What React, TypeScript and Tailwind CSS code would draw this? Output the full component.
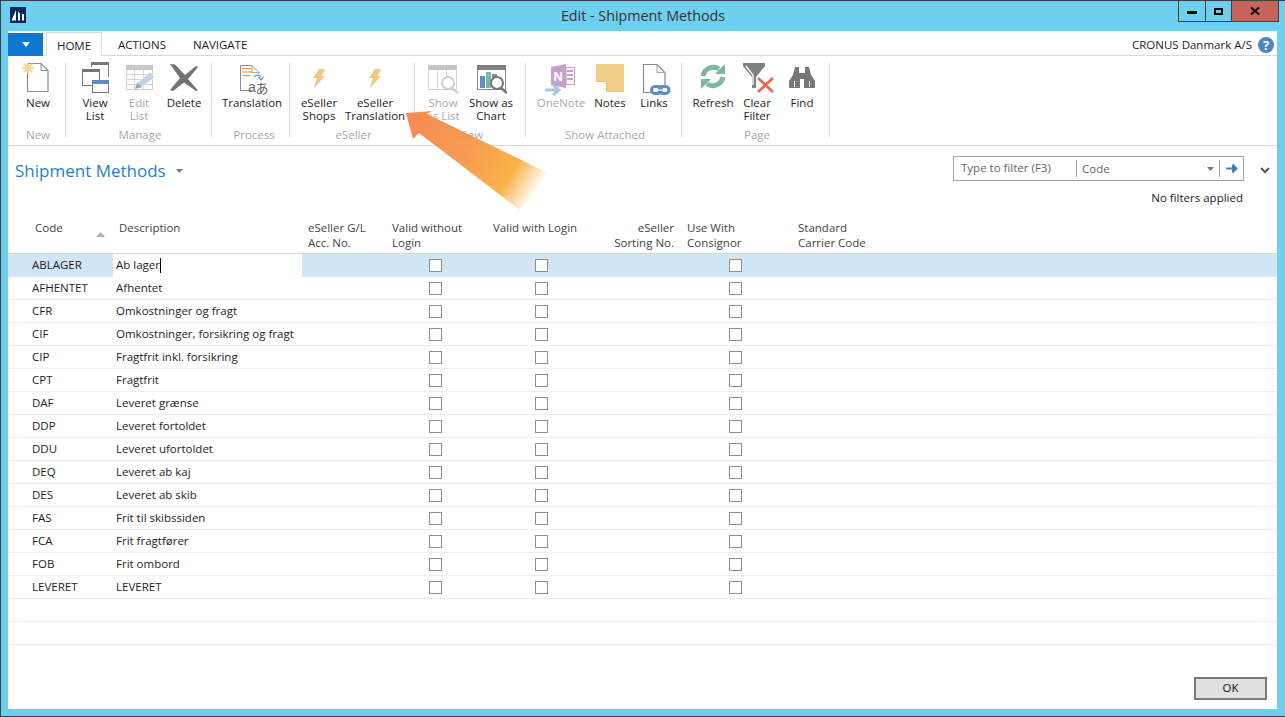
import React from "react";

const W = ({ children, w = 34, h = 34 }: { children: React.ReactNode; w?: number; h?: number }) => (
  <svg width={w} height={h} viewBox={`0 0 ${w} ${h}`} fill="none">{children}</svg>
);

const IconNew = () => (
  <W>
    <path d="M6.500 12V1.500H20L27 8.500V29.500H6.500V12" stroke="#8c8c8c" strokeWidth="1.200" />
    <path d="M20 1.500V8.500H27" stroke="#8c8c8c" strokeWidth="1" />
    <circle cx="7" cy="6" r="3.500" fill="#f6dc9e" />
    <path d="M7 0V12M1 6H13M2.500 1.500L11.500 10.500M11.500 1.500L2.500 10.500" stroke="#f6d68c" strokeWidth="1.500" />
  </W>
);
const IconViewList = () => (
  <W>
    <path d="M13.500 5V0.500H30.500V15" stroke="#777" strokeWidth="1" />
    <rect x="13" y="0" width="18" height="3" fill="#777" />
    <rect x="4.500" y="7.500" width="17" height="16" fill="#fff" stroke="#777" />
    <rect x="4" y="7" width="18" height="3" fill="#777" />
    <rect x="14.500" y="18.500" width="16" height="12" fill="#fff" stroke="#777" />
    <rect x="14" y="18" width="17" height="4" fill="#5b8fc4" />
  </W>
);
const IconEditList = () => (
  <W>
    <rect x="4.500" y="3.500" width="26" height="24" stroke="#cfcfcf" fill="#fff" />
    <rect x="4" y="3" width="27" height="5" fill="#c8c8c8" />
    <path d="M4 12.500H31M4 17.500H31M4 22.500H31M12.500 8V27M21.500 8V27" stroke="#d6d6d6" />
    <path d="M13 27L15 21L28 10L33 15L20 25Z" fill="#bcd3ea" stroke="#fff" strokeWidth="0.800" />
    <path d="M13 27L15 21L20 25Z" fill="#8aa9c8" />
  </W>
);
const IconDelete = () => (
  <W>
    <path d="M3 2L8 2.500L18 13L29 4L31 5L21 17L31 28.500L29 29L17 20.500L6 29L3 28L13 16Z" fill="#737373" />
  </W>
);
const IconTranslation = () => (
  <W w={36}>
    <path d="M18 28.500H6.500V3.500H18L25 10.500V12" stroke="#8c8c8c" />
    <path d="M18 3.500V10.500H25" stroke="#aaa" />
    <path d="M8 6.500H18M8 10H18M8 13.500H16" stroke="#ef8e4d" strokeWidth="1.200" />
    <path d="M20 15C22 12.500 26 12.500 27 15.500" stroke="#5c9bd4" strokeWidth="1.200" />
    <path d="M24.500 15L27 18L29.500 15" stroke="#5c9bd4" strokeWidth="1.200" />
    <text x="14" y="30" fontSize="14" fontFamily="'Liberation Sans', sans-serif" fill="#666">a</text>
    <text x="21.500" y="31" fontSize="13" fontFamily="'Noto Sans CJK JP', sans-serif" fill="#666">あ</text>
  </W>
);
const IconBolt = () => (
  <W w={16}>
    <path d="M8 7H14L10.500 14H14L3 26L6 16H2Z" fill="#f0c884" />
  </W>
);
const IconShowList = () => (
  <W w={32}>
    <g transform="translate(0 2)">
      <rect x="1.500" y="1.500" width="28" height="24" stroke="#d4d4d4" fill="#fff" />
      <rect x="1" y="1" width="29" height="5" fill="#c4c4c4" />
      <path d="M10.500 6V26M19.500 6V26" stroke="#d4d4d4" />
      <circle cx="21" cy="19" r="6" stroke="#d0d0d0" strokeWidth="2" fill="#fff" />
      <path d="M25 24L31 29" stroke="#cfcfcf" strokeWidth="2.500" />
    </g>
  </W>
);
const IconChart = () => (
  <W w={32}>
    <g transform="translate(1 2)">
      <rect x="1.500" y="1.500" width="28" height="24" stroke="#8a8a8a" fill="#fff" />
      <rect x="1" y="1" width="29" height="5" fill="#808080" />
      <rect x="4" y="12" width="5" height="12" fill="#5c90c0" />
      <rect x="10" y="8" width="5" height="16" fill="#80b5a6" />
      <rect x="16" y="10" width="5" height="14" fill="#8a8a8a" />
      <circle cx="21" cy="19" r="6" stroke="#777" strokeWidth="2" fill="#fff" />
      <path d="M25 24L31 29" stroke="#777" strokeWidth="2.500" />
    </g>
  </W>
);
const IconOneNote = () => (
  <W>
    <path d="M7 5L22 2V26L7 23Z" fill="#c5a0c9" />
    <path d="M22 5.500H30.500V22.500H22Z" fill="#fff" stroke="#c5a0c9" strokeWidth="1.200" />
    <path d="M23 9H29M23 13H29M23 17H29" stroke="#c5a0c9" strokeWidth="2" />
    <text x="9.500" y="19" fontSize="13" fontWeight="700" fontFamily="'Liberation Sans', sans-serif" fill="#fff">N</text>
    <path d="M1 28H14M9 23L15 28L9 33" stroke="#a9c6e3" strokeWidth="3" />
  </W>
);
const IconNotes = () => (
  <W w={30}>
    <path d="M1 2H29V30H12L1 19Z" fill="#efce8a" />
    <path d="M1 19H12V30Z" fill="#fff" />
    <path d="M1.500 19.500H11.500V29.500" stroke="#e3bd72" strokeWidth="1" />
  </W>
);
const IconLinks = () => (
  <W w={34}>
    <path d="M14 30.500H6.500V2.500H20L28 10.500V23" stroke="#8c8c8c" strokeWidth="1.200" />
    <path d="M20 2.500V10.500H28" stroke="#a5a5a5" />
    <rect x="14.500" y="24.500" width="10" height="7" rx="3.500" stroke="#5a8fc4" strokeWidth="3" />
    <rect x="22" y="24.500" width="10" height="7" rx="3.500" stroke="#5a8fc4" strokeWidth="3" />
    <path d="M19 28H27" stroke="#fff" strokeWidth="1.300" />
  </W>
);
const IconRefresh = () => (
  <W w={30}>
    <path d="M5 14A10.500 10.500 0 0 1 21 7" stroke="#7fb5a5" strokeWidth="5" />
    <path d="M27 2V12H17Z" fill="#7fb5a5" />
    <path d="M25 15A10.500 10.500 0 0 1 9 22" stroke="#7fb5a5" strokeWidth="5" />
    <path d="M3 27V17H13Z" fill="#7fb5a5" />
  </W>
);
const IconClear = () => (
  <W>
    <path d="M3 1H25V4L16 15V26H12V15L3 4Z" fill="#808080" />
    <path d="M6 4L13 13V23" stroke="#fff" strokeWidth="1.300" />
    <path d="M18 16L33 30M33 16L18 30" stroke="#e0704f" strokeWidth="2.800" />
  </W>
);
const IconFind = () => (
  <W w={30}>
    <path d="M8 5H12V11H18V5H22L24 13L28 19V26H17V17H13V26H2V19L6 13Z" fill="#777" />
    <path d="M7.500 19V25M22.500 19V25" stroke="#fff" strokeWidth="1" />
  </W>
);

type B = { lines: string[]; w: number; icon: React.ReactNode; off?: boolean };
type G = { label: string; w: number; pl: number; lp: number; items: B[] };

const groups: G[] = [
  { label: "New", w: 57, pl: 4, lp: 2, items: [{ lines: ["New"], w: 52, icon: <IconNew /> }] },
  {
    label: "Manage", w: 145, pl: 7, lp: 2, items: [
      { lines: ["View", "List"], w: 44, icon: <IconViewList /> },
      { lines: ["Edit", "List"], w: 44, icon: <IconEditList />, off: true },
      { lines: ["Delete"], w: 46, icon: <IconDelete /> },
    ]
  },
  { label: "Process", w: 77, pl: 2, lp: 6, items: [{ lines: ["Translation"], w: 76, icon: <IconTranslation /> }] },
  {
    label: "eSeller", w: 124, pl: 1, lp: 2, items: [
      { lines: ["eSeller", "Shops"], w: 56, icon: <IconBolt /> },
      { lines: ["eSeller", "Translation"], w: 56, icon: <IconBolt /> },
    ]
  },
  {
    label: "View", w: 110, pl: 5, lp: 0, items: [
      { lines: ["Show", "as List"], w: 46, icon: <IconShowList />, off: true },
      { lines: ["Show as", "Chart"], w: 50, icon: <IconChart /> },
    ]
  },
  {
    label: "Show Attached", w: 155, pl: 4, lp: 2, items: [
      { lines: ["OneNote"], w: 62, icon: <IconOneNote />, off: true },
      { lines: ["Notes"], w: 36, icon: <IconNotes /> },
      { lines: ["Links"], w: 52, icon: <IconLinks /> },
    ]
  },
  {
    label: "Page", w: 147, pl: 6, lp: 2, items: [
      { lines: ["Refresh"], w: 50, icon: <IconRefresh /> },
      { lines: ["Clear", "Filter"], w: 38, icon: <IconClear /> },
      { lines: ["Find"], w: 52, icon: <IconFind /> },
    ]
  },
];

const rows: [string, string][] = [
  ["ABLAGER", "Ab lager"],
  ["AFHENTET", "Afhentet"],
  ["CFR", "Omkostninger og fragt"],
  ["CIF", "Omkostninger, forsikring og fragt"],
  ["CIP", "Fragtfrit inkl. forsikring"],
  ["CPT", "Fragtfrit"],
  ["DAF", "Leveret grænse"],
  ["DDP", "Leveret fortoldet"],
  ["DDU", "Leveret ufortoldet"],
  ["DEQ", "Leveret ab kaj"],
  ["DES", "Leveret ab skib"],
  ["FAS", "Frit til skibssiden"],
  ["FCA", "Frit fragtfører"],
  ["FOB", "Frit ombord"],
  ["LEVERET", "LEVERET"],
];

const cols = "grid grid-cols-[105px_189px_84px_101px_109px_85px_111px_1fr]";

const Check = ({ pl }: { pl: string }) => (
  <div className={`flex items-center ${pl}`}>
    <div className="w-[13px] h-[13px] border border-[#8e8e8e] bg-white" />
  </div>
);

export default function App() {
  return (
    <div className="relative w-[1285px] h-[717px] overflow-hidden bg-[#6fcfef] border-t border-l border-b border-[#3c4043] flex flex-col text-[11.5px] leading-[13px] text-[#1e1e1e] font-['Open_Sans','Noto_Sans',sans-serif]">
      {/* title bar */}
      <div className="h-[30px] flex shrink-0">
        <div className="ml-[9px] mt-[6px] w-[16px] h-[16px] bg-[#0b2a5c]">
          <svg width="16" height="16" viewBox="0 0 16 16"><path d="M1.500 13.500L6 3V13.500ZM8 13.500V4L10 7V13.500ZM12 13.500V7H14V13.500Z" fill="#fff" /></svg>
        </div>
        <div className="flex-1 pl-[82px] text-center text-[14.300px] leading-[30px] text-[#333]">Edit - Shipment Methods</div>
        <div className="mr-[6px] w-[101px] h-[21px] flex border-l border-r border-b border-[#3c4043]">
          <div className="w-[27px] border-r border-[#3c4043] flex items-center justify-center">
            <div className="w-[10px] h-[3px] bg-black mt-[3px]" />
          </div>
          <div className="w-[26px] border-r border-[#3c4043] flex items-center justify-center">
            <div className="w-[9px] h-[7px] border-2 border-black" />
          </div>
          <div className="flex-1 bg-[#c8635a] flex items-center justify-center">
            <svg width="10" height="8" viewBox="0 0 10 8"><path d="M1 0.500L9 7.500M9 0.500L1 7.500" stroke="#000" strokeWidth="2" /></svg>
          </div>
        </div>
      </div>

      {/* client */}
      <div className="ml-[7px] mr-[8px] flex-1 mb-[7px] bg-white flex flex-col min-h-0">
        {/* tabs */}
        <div className="h-[25px] shrink-0 flex items-end border-b border-[#d9d9d9] pr-[3px]">
          <div className="w-[35px] h-[23px] mb-[-1px] bg-[#0e78cf] flex items-center justify-center">
            <svg width="8" height="5" viewBox="0 0 8 5"><path d="M0 0H8L4 5Z" fill="#fff" /></svg>
          </div>
          <div className="ml-[3px] w-[56px] h-[24px] mb-[-1px] border border-b-0 border-[#d9d9d9] bg-white text-center leading-[26px]">HOME</div>
          <div className="ml-[16px] leading-[25px] h-[23px]">ACTIONS</div>
          <div className="ml-[27px] leading-[25px] h-[23px]">NAVIGATE</div>
          <div className="ml-auto h-[23px] leading-[25px]">CRONUS Danmark A/S</div>
          <div className="ml-[6px] mb-[2px] w-[16px] h-[16px] rounded-full bg-[#4f86c0] text-white text-center text-[13px] leading-[16px] font-bold">?</div>
        </div>

        {/* ribbon */}
        <div className="h-[90px] shrink-0 flex border-b border-[#d9d9d9]">
          {groups.map((g) => (
            <div key={g.label} style={{ width: g.w + 1 }} className="flex flex-col relative h-[89px]">
              <div className="flex flex-1 pt-[6px]" style={{ paddingLeft: g.pl }}>
                {g.items.map((b) => (
                  <div key={b.lines.join()} style={{ width: b.w }} className={`flex flex-col items-center shrink-0 ${b.off ? "text-[#a9a9a9]" : ""}`}>
                    <div className="h-[34px] flex items-start justify-center">{b.icon}</div>
                    {b.lines.map((l) => (
                      <div key={l} className="whitespace-nowrap">{l}</div>
                    ))}
                  </div>
                ))}
              </div>
              <div className="text-center text-[#a8a8a8] h-[17px]" style={{ paddingLeft: g.lp }}>{g.label}</div>
              <div className="absolute right-0 top-[7px] bottom-[8px] w-px bg-[#d9d9d9]" />
            </div>
          ))}
        </div>

        {/* page header */}
        <div className="h-[74px] shrink-0 flex">
          <div className="ml-[7px] mt-[14px] text-[17px] leading-[22px] text-[#2b7fc5] flex items-center h-[22px]">
            Shipment Methods
            <svg className="ml-[10px]" width="7" height="4" viewBox="0 0 7 4"><path d="M0 0H7L3.500 4Z" fill="#777" /></svg>
          </div>
          <div className="ml-auto mt-[10px] mr-[33px] flex flex-col items-end">
            <div className="w-[291px] h-[25px] border border-[#a5a5a5] flex items-center text-[#666]">
              <div className="w-[123px] pl-[7px] border-r border-[#a5a5a5] h-[17px] leading-[15px]">Type to filter (F3)</div>
              <div className="w-[143px] pl-[5px] flex items-center border-r border-[#a5a5a5] h-[17px]">
                Code
                <svg className="ml-auto mr-[5px]" width="7" height="4" viewBox="0 0 7 4"><path d="M0 0H7L3.500 4Z" fill="#777" /></svg>
              </div>
              <svg className="ml-[6px]" width="12" height="9" viewBox="0 0 12 9"><path d="M0 4.500H10M6.500 0.500L10.500 4.500L6.500 8.500" stroke="#4b84bd" strokeWidth="2" /></svg>
            </div>
            <div className="mt-[10px] mr-[1px] text-[#222]">No filters applied</div>
          </div>
          <svg className="absolute left-[1259px] top-[166px]" width="10" height="7" viewBox="0 0 10 7"><path d="M1 1L5 5L9 1" stroke="#555" strokeWidth="2" fill="none" /></svg>
        </div>

        {/* table head */}
        <div className={`${cols} h-[34px] shrink-0 border-b border-[#d9d9d9] text-[#444] leading-[15px]`}>
          <div className="pl-[27px] relative">
            Code
            <svg className="absolute left-[88px] top-[12px]" width="9" height="5" viewBox="0 0 9 5"><path d="M0 5H9L4.500 0Z" fill="#b0b0b0" /></svg>
          </div>
          <div className="pl-[6px]">Description</div>
          <div className="pl-[6px]">eSeller G/L<br />Acc. No.</div>
          <div className="pl-[6px]">Valid without<br />Login</div>
          <div className="pl-[6px]">Valid with Login</div>
          <div className="pr-[7px] text-right">eSeller<br />Sorting No.</div>
          <div className="pl-[6px]">Use With<br />Consignor</div>
          <div className="pl-[6px]">Standard<br />Carrier Code</div>
        </div>

        {/* rows */}
        {rows.map(([c, d], i) => (
          <div key={c} className={`${cols} h-[23px] shrink-0 ${i === 0 ? "bg-[#d0e6f5]" : "border-b border-[#ededed]"}`}>
            <div className="pl-[24px] leading-[22px]">{c}</div>
            <div className={`pl-[3px] leading-[22px] whitespace-nowrap ${i === 0 ? "bg-white" : ""}`}>
              {d}
              {i === 0 && <span className="inline-block w-px h-[15px] bg-black align-middle" />}
            </div>
            <div />
            <Check pl="pl-[43px]" />
            <Check pl="pl-[48px]" />
            <div />
            <Check pl="pl-[48px]" />
            <div />
          </div>
        ))}
        <div className="h-[23px] shrink-0 border-b border-[#ededed]" />
        <div className="h-[23px] shrink-0 border-b border-[#ededed]" />

        {/* footer */}
        <div className="mt-auto mb-[9px] flex justify-end pr-[10px]">
          <div className="w-[73px] h-[23px] bg-[#e1e1e1] border-2 border-[#7a7a7a] text-center leading-[18px] text-[#111]">OK</div>
        </div>
      </div>

      {/* annotation arrow */}
      <svg className="absolute left-0 top-0 pointer-events-none" width="1285" height="717" viewBox="0 0 1285 717" fill="none">
        <defs>
          <linearGradient id="arrowFill" gradientUnits="userSpaceOnUse" x1="412" y1="115" x2="535" y2="193">
            <stop offset="0" stopColor="#f4884e" stopOpacity="0.97" />
            <stop offset="0.45" stopColor="#f5974a" stopOpacity="0.95" />
            <stop offset="0.78" stopColor="#f9ae3e" stopOpacity="0.95" />
            <stop offset="1" stopColor="#f9ae3e" stopOpacity="0" />
          </linearGradient>
        </defs>
        <path d="M405 112L431 110L426 113L547 172L519 209L418 132L412 138Z" fill="url(#arrowFill)" />
      </svg>
    </div>
  );
}
